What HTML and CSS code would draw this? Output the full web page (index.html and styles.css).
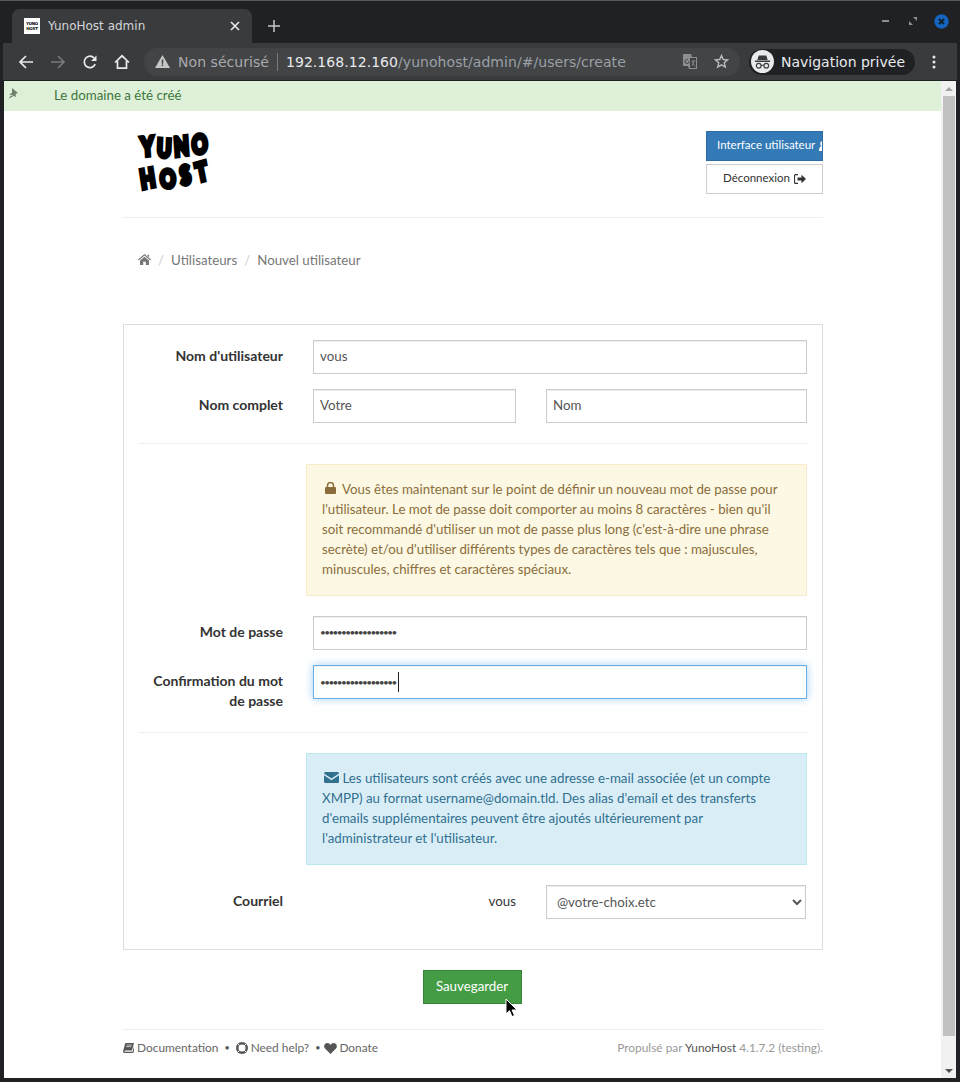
FILE: index.html
```html
<!DOCTYPE html>
<html lang="fr">
<head>
    <meta charset="UTF-8">
    <title>YunoHost admin</title>
    <link rel="stylesheet" href="styles.css">
</head>
<body>
<div class="window">

    <div class="tabstrip">
        <div class="tab">
            <span class="favicon"><span>YUNO</span><span>HOST</span></span>
            <span class="tab-title">YunoHost admin</span>
            <svg class="tab-close" width="10" height="10" viewBox="0 0 10 10"><path d="M1 1l8 8M9 1l-8 8" stroke="#e8eaed" stroke-width="1.6"/></svg>
        </div>
        <svg class="new-tab" width="12" height="12" viewBox="0 0 12 12"><path d="M6 0v12M0 6h12" stroke="#c4c7c5" stroke-width="1.5"/></svg>
        <div class="win-buttons">
            <svg width="10" height="4" viewBox="0 0 10 4"><rect y="1" width="7" height="2" fill="#8f8f8f"/></svg>
            <svg width="8" height="8" viewBox="0 0 8 8"><path d="M4 0h4v4zM0 4l4 4H0z" fill="#8f8f8f"/></svg>
            <svg width="15" height="15" viewBox="0 0 15 15"><circle cx="7.5" cy="7.5" r="7.2" fill="#1565c0"/><path d="M5 5l5 5M10 5l-5 5" stroke="#15202b" stroke-width="2"/></svg>
        </div>
    </div>

    <div class="toolbar">
        <svg class="nav-icon" width="16" height="16" viewBox="0 0 16 16"><path d="M15 8H2M8 2L2 8l6 6" fill="none" stroke="#e8eaed" stroke-width="1.7"/></svg>
        <svg class="nav-icon" width="16" height="16" viewBox="0 0 16 16"><path d="M1 8h13M8 2l6 6-6 6" fill="none" stroke="#77797b" stroke-width="1.7"/></svg>
        <svg class="nav-icon" width="16" height="16" viewBox="0 0 16 16"><path d="M13.2 10.2A5.7 5.7 0 1 1 12.2 4" fill="none" stroke="#e8eaed" stroke-width="1.7"/><path d="M14.5 1.5v5.5H9z" fill="#e8eaed"/></svg>
        <svg class="nav-icon" width="16" height="16" viewBox="0 0 16 16"><path d="M1 8.5L8 1.8l7 6.7M3.5 7v7.2h9V7" fill="none" stroke="#e8eaed" stroke-width="1.7"/></svg>
        <div class="omnibox">
            <svg width="15" height="13" viewBox="0 0 15 13"><path d="M7.5 0L15 13H0z" fill="#c4c7c5"/><path d="M6.8 4.5h1.4v4.2H6.8zM6.8 9.6h1.4v1.4H6.8z" fill="#3a3a3a"/></svg>
            <span class="not-secure">Non sécurisé</span>
            <span class="omni-sep"></span>
            <span class="url"><b>192.168.12.160</b>/yunohost/admin/#/users/create</span>
            <svg class="translate" width="14" height="15" viewBox="0 0 14 15"><path d="M0 0h8l1 3h5v12H6l-1-3H0z" fill="#8c8e90"/><path d="M7 4h6v10H7z" fill="#3f4042"/><path d="M6 7.500a2 2 0 1 1-.8-1.600" fill="none" stroke="#3f4042" stroke-width="1"/><path d="M8.500 7h4M10.500 7c0 3-1 4-2 5M9.500 8.500c.5 1.500 1.500 2.800 3 3.500" fill="none" stroke="#8c8e90" stroke-width="1"/></svg>
            <svg class="star" width="15" height="15" viewBox="0 0 15 15"><path d="M7.500 1.500l1.800 4 4.300.4-3.300 2.900 1 4.300-3.800-2.300-3.800 2.300 1-4.300L1.400 5.900l4.300-.4z" fill="none" stroke="#b9bbbe" stroke-width="1.400"/></svg>
        </div>
        <div class="incognito">
            <span class="incognito-icon">
                <svg width="18" height="16" viewBox="0 0 18 16"><path d="M5 1h8l1.500 5h-11zM1 6.500h16V8H1z" fill="#3a3b3d"/><circle cx="5" cy="12" r="2.500" fill="none" stroke="#3a3b3d" stroke-width="1.200"/><circle cx="13" cy="12" r="2.500" fill="none" stroke="#3a3b3d" stroke-width="1.200"/><path d="M7.500 11.500h3" stroke="#3a3b3d" stroke-width="1.200"/></svg>
            </span>
            <span>Navigation privée</span>
        </div>
        <svg class="menu-dots" width="4" height="14" viewBox="0 0 4 14"><circle cx="2" cy="2" r="1.500" fill="#e8eaed"/><circle cx="2" cy="7" r="1.500" fill="#e8eaed"/><circle cx="2" cy="12" r="1.500" fill="#e8eaed"/></svg>
    </div>
    <div class="toolbar-line"></div>

    <div class="viewport">
        <div class="page">
            <div class="flash">
                <svg class="flash-pin" width="11" height="11" viewBox="0 0 11 11"><path d="M4 0l6 5-2.500 1 .5 3L1 6l3-.8zM3 7.500L.5 10.800 5 8.500z" fill="#6f7f6b"/></svg>
                <span>Le domaine a été créé</span>
            </div>

            <div class="container">
                <header class="top">
                    <div class="logo">
                        <div class="logo-line"><span>Y</span><span>U</span><span>N</span><span>O</span></div>
                        <div class="logo-line"><span>H</span><span>O</span><span>S</span><span>T</span></div>
                    </div>
                    <div class="top-buttons">
                        <a class="btn btn-blue">Interface utilisateur
                            <svg width="10" height="10" viewBox="0 0 10 10"><circle cx="4" cy="2.800" r="2.800" fill="#fff"/><path d="M0 10c0-3.500 1-5 4-5s5 1.500 5 5z" fill="#fff"/></svg>
                        </a>
                        <a class="btn btn-plain">Déconnexion
                            <svg width="12" height="10" viewBox="0 0 12 10"><path d="M4 .7H1.500a1 1 0 0 0-1 1v6.600a1 1 0 0 0 1 1H4" fill="none" stroke="#333" stroke-width="1.200"/><path d="M3.500 3.400h4V.8L12 5 7.500 9.200V6.600h-4z" fill="#333"/></svg>
                        </a>
                    </div>
                </header>

                <nav class="breadcrumb">
                    <svg width="13" height="11" viewBox="0 0 13 11"><path d="M6.500 0L13 5.600l-.7.800-5.800-5-5.800 5L0 5.600zM2 6.500l4.500-3.800L11 6.500V11H7.800V7.700H5.200V11H2zM9.500 .8h1.600v2.400L9.500 1.800z" fill="#777"/></svg>
                    <span class="crumb-sep">/</span>
                    <a>Utilisateurs</a>
                    <span class="crumb-sep">/</span>
                    <a>Nouvel utilisateur</a>
                </nav>

                <form class="panel">
                    <div class="row">
                        <label class="row-label">Nom d'utilisateur</label>
                        <input class="field" type="text" value="vous">
                    </div>
                    <div class="row">
                        <label class="row-label">Nom complet</label>
                        <div class="two-fields">
                            <input class="field" type="text" value="Votre">
                            <input class="field" type="text" value="Nom">
                        </div>
                    </div>

                    <hr class="sep">

                    <div class="note note-warning">
                        <svg width="11" height="12" viewBox="0 0 11 12"><path d="M2.500 5.500V3.500a3 3 0 0 1 6 0v2" fill="none" stroke="#8a6d3b" stroke-width="1.500"/><rect y="5" width="11" height="7" rx="1" fill="#8a6d3b"/></svg>
                        Vous êtes maintenant sur le point de définir un nouveau mot de passe pour l'utilisateur. Le mot de passe doit comporter au moins 8 caractères - bien qu'il soit recommandé d'utiliser un mot de passe plus long (c'est-à-dire une phrase secrète) et/ou d'utiliser différents types de caractères tels que : majuscules, minuscules, chiffres et caractères spéciaux.
                    </div>

                    <div class="row">
                        <label class="row-label">Mot de passe</label>
                        <input class="field field-dots" type="text" value="••••••••••••••••••">
                    </div>
                    <div class="row">
                        <label class="row-label row-label-tall">Confirmation du mot de passe</label>
                        <div class="field field-dots field-focus">••••••••••••••••••<span class="caret"></span></div>
                    </div>

                    <hr class="sep">

                    <div class="note note-info">
                        <svg width="15" height="11" viewBox="0 0 15 11"><path d="M0 1.500A1.500 1.500 0 0 1 1.500 0h12A1.500 1.500 0 0 1 15 1.500L7.500 6.500zM0 3.300l7.500 5 7.500-5V9.500A1.500 1.500 0 0 1 13.500 11h-12A1.500 1.500 0 0 1 0 9.500z" fill="#31708f"/></svg>
                        Les utilisateurs sont créés avec une adresse e-mail associée (et un compte XMPP) au format username@domain.tld. Des alias d'email et des transferts d'emails supplémentaires peuvent être ajoutés ultérieurement par l'administrateur et l'utilisateur.
                    </div>

                    <div class="row row-mail">
                        <label class="row-label">Courriel</label>
                        <div class="two-fields">
                            <span class="mail-user">vous</span>
                            <select class="field">
                                <option>@votre-choix.etc</option>
                            </select>
                        </div>
                    </div>
                </form>

                <div class="actions">
                    <button class="btn-save" type="button">Sauvegarder</button>
                </div>

                <footer class="foot">
                    <div class="foot-links">
                        <svg width="11" height="10" viewBox="0 0 12 11"><path d="M2.500 0H12L9.800 8.300H2.300c-.8 0-.8 1.400 0 1.400h8.200L12 3.500V9l-1 2H1.500C.4 11-.2 10 .1 8.800z" fill="#555"/><path d="M4 2.300h5.500M3.500 4h5.500" stroke="#fff" stroke-width=".7"/></svg>
                        <a>Documentation</a>
                        <span class="dot">•</span>
                        <svg width="12" height="12" viewBox="0 0 12 12"><circle cx="6" cy="6" r="6" fill="#555"/><circle cx="6" cy="6" r="3.500" fill="#fff"/><path d="M1.800 1.800l2 2M10.200 1.800l-2 2M1.800 10.200l2-2M10.200 10.200l-2-2" stroke="#fff" stroke-width="1"/></svg>
                        <a>Need help?</a>
                        <span class="dot">•</span>
                        <svg class="foot-heart" width="13" height="11" viewBox="0 0 13 11"><path d="M6.500 11L1 5.500C-1 3 .8 0 3.300 0c1.400 0 2.500.8 3.200 2C7.200.8 8.300 0 9.700 0c2.500 0 4.300 3 2.300 5.500z" fill="#555"/></svg>
                        <a>Donate</a>
                    </div>
                    <div class="foot-credit">Propulsé par <a>YunoHost</a> 4.1.7.2 (testing).</div>
                </footer>
            </div>
        </div>

        <div class="scrollbar">
            <span class="arrow-up"></span>
            <span class="thumb"></span>
            <span class="arrow-down"></span>
        </div>
    </div>

    <svg class="cursor" width="13" height="20" viewBox="0 0 13 20"><path d="M1 1v15l3.500-3.300L7 18.500l2.500-1-2.500-5.500h5z" fill="#000" stroke="#fff" stroke-width="1"/></svg>
</div>
</body>
</html>
```

FILE: styles.css
```css
* {
    box-sizing: border-box;
}

html, body {
    margin: 0;
    height: 100%;
}

body {
    overflow: hidden;
    background-color: #222;
}

.window {
    position: relative;
    width: 960px;
    height: 1082px;
    padding: 2px 4px 4px 4px;
    background-color: #202124;
    border-top: 1px solid #5a5a5a;
    display: flex;
    flex-direction: column;
    font-family: 'DejaVu Sans', sans-serif;
}

/* browser chrome */
.tabstrip {
    height: 40px;
    flex: none;
    display: flex;
    align-items: flex-end;
    padding-left: 8px;
}

.tab {
    width: 240px;
    height: 34px;
    background-color: #3a3b3d;
    border-radius: 8px 8px 0 0;
    display: flex;
    align-items: center;
    padding: 0 12px;
    color: #d4d6d8;
    font-size: 12px;
}

.favicon {
    width: 16px;
    height: 16px;
    background-color: #fff;
    color: #000;
    font-size: 4px;
    line-height: 5px;
    font-weight: 700;
    letter-spacing: -0.2px;
    display: flex;
    flex-direction: column;
    align-items: center;
    justify-content: center;
    margin-right: 8px;
}

.tab-title {
    flex: 1;
}

.new-tab {
    margin: 0 0 11px 16px;
}

.win-buttons {
    margin-left: auto;
    height: 100%;
    display: flex;
    align-items: center;
    gap: 17px;
    padding: 0 7px 4px 0;
}

.toolbar {
    height: 37px;
    flex: none;
    background-color: #3a3b3d;
    margin: 0 -1px;
    display: flex;
    align-items: center;
    padding-left: 15px;
}

.toolbar-line {
    height: 1px;
    flex: none;
    background-color: #202124;
}

.nav-icon {
    margin-right: 16px;
}

.omnibox {
    width: 596px;
    height: 28px;
    flex: none;
    margin-left: -2px;
    border-radius: 14px;
    background-color: #434446;
    display: flex;
    align-items: center;
    padding: 0 11px 0 11px;
    font-size: 14px;
    letter-spacing: 0.05px;
    white-space: nowrap;
}

.not-secure {
    color: #a9abae;
    margin-left: 8px;
}

.omni-sep {
    width: 1px;
    height: 18px;
    background-color: #77797b;
    margin: 0 8px 0 8px;
}

.url {
    color: #9aa0a6;
    flex: 1;
}

.url b {
    color: #e8eaed;
    font-weight: 400;
}

.translate {
    margin-right: 17px;
}

.incognito {
    margin-left: 9px;
    width: 166px;
    height: 26px;
    flex: none;
    border-radius: 13px;
    background-color: #202124;
    display: flex;
    align-items: center;
    gap: 7px;
    color: #e8eaed;
    font-size: 14px;
    white-space: nowrap;
}

.incognito-icon {
    width: 23px;
    height: 23px;
    margin-left: 2px;
    border-radius: 50%;
    background-color: #e8eaed;
    display: flex;
    align-items: center;
    justify-content: center;
}

.incognito-icon svg {
    width: 17px;
}

.menu-dots {
    margin-left: 17px;
}

/* page */
.viewport {
    flex: 1;
    min-height: 0;
    display: flex;
    background-color: #fff;
}

.page {
    flex: 1;
    min-width: 0;
    overflow: hidden;
    font-family: 'Lato', sans-serif;
    font-size: 13.3px;
    line-height: 20px;
    color: #333;
}

.scrollbar {
    width: 15px;
    flex: none;
    background-color: #f1f1f1;
    display: flex;
    flex-direction: column;
    align-items: center;
    padding: 6px 0 5px;
}

.arrow-up, .arrow-down {
    width: 0;
    height: 0;
    border-left: 4px solid transparent;
    border-right: 4px solid transparent;
    flex: none;
}

.arrow-up {
    border-bottom: 4px solid #a3a3a3;
}

.arrow-down {
    border-top: 4px solid #505050;
}

.thumb {
    width: 12px;
    flex: 1;
    margin: 5px 0 33px;
    background-color: #c1c1c1;
}

.flash {
    height: 30px;
    background-color: #dff0d8;
    color: #3c763d;
    display: flex;
    align-items: center;
    padding: 0 0 2px 4px;
}

.flash span {
    margin-left: 35px;
}

.flash-pin {
    margin-top: -4px;
}

.container {
    width: 700px;
    margin-left: 119px;
}

.top {
    height: 107px;
    padding: 19px 0 0 15px;
    border-bottom: 1px solid #eee;
    display: flex;
    justify-content: space-between;
    align-items: flex-start;
}

/* logo is real text, thickened with a stroke so it looks brushed */
.logo {
    width: 66px;
    margin: 1px 0 0 3px;
    font-weight: 900;
    font-size: 19px;
    line-height: 30px;
    color: #000;
    -webkit-text-stroke: 3.5px #000;
}

.logo-line {
    display: flex;
    justify-content: space-between;
    height: 30px;
}

.logo-line span {
    display: block;
    transform: scaleY(1.35) rotate(-5deg);
}

.logo-line span:nth-child(2) {
    transform: translateY(2px) scaleY(1.3) rotate(3deg);
}

.logo-line span:nth-child(4) {
    transform: translateY(-2px) scaleY(1.35) rotate(-8deg);
}

.logo-line + .logo-line {
    width: 67px;
    margin-left: -1px;
    transform: rotate(-5deg);
}

.top-buttons {
    width: 117px;
    margin-top: 1px;
    display: flex;
    flex-direction: column;
    gap: 3px;
}

.btn {
    height: 30px;
    font-size: 11.5px;
    display: flex;
    align-items: center;
    justify-content: center;
    gap: 4px;
    padding-bottom: 2px;
    white-space: nowrap;
    overflow: hidden;
}

.btn svg {
    flex: none;
    margin-top: 2px;
}

.btn-blue {
    background-color: #337ab7;
    border: 1px solid #2e6da4;
    color: #fff;
    justify-content: flex-start;
    padding-left: 10px;
}

.btn-plain {
    background-color: #fff;
    border: 1px solid #ccc;
    color: #333;
}

.breadcrumb {
    height: 106px;
    padding: 32px 0 0 15px;
    display: flex;
    align-items: flex-start;
    color: #777;
}

.breadcrumb svg {
    margin-top: 4px;
}

.crumb-sep {
    color: #ccc;
    margin: 0 7px;
}

.panel {
    height: 626px;
    border: 1px solid #ddd;
    padding: 15px 15px 0;
}

.row {
    display: flex;
    margin-bottom: 15px;
}

.row-label {
    width: 144px;
    flex: none;
    margin-right: 30px;
    padding-top: 6px;
    font-size: 14px;
    font-weight: 700;
    text-align: right;
}

.row-label-tall {
    padding-bottom: 1px;
}

.field {
    flex: 1;
    min-width: 0;
    height: 34px;
    padding: 5px 6px 7px;
    border: 1px solid #ccc;
    background-color: #fff;
    color: #555;
    font-family: 'Lato', sans-serif;
    font-size: 13.3px;
    line-height: 20px;
    outline: none;
    border-radius: 0;
    box-shadow: inset 0 1px 1px rgba(0, 0, 0, 0.075);
}

.two-fields {
    flex: 1;
    display: grid;
    grid-template-columns: 203px 1fr;
    column-gap: 30px;
}

.field-dots {
    color: #444;
    font-size: 10px;
    letter-spacing: -1.6px;
    white-space: nowrap;
}

.field-focus {
    border-color: #66afe9;
    box-shadow: inset 0 1px 1px rgba(0, 0, 0, 0.075), 0 0 8px rgba(102, 175, 233, 0.6);
    display: flex;
    align-items: center;
    padding: 6px;
}

.caret {
    width: 1px;
    height: 20px;
    margin-left: 2px;
    background-color: #222;
}

.sep {
    border: none;
    border-top: 1px solid #eee;
    margin: 20px 0;
}

.note {
    margin: 0 0 20px 167px;
    padding: 14px 15px 16px;
    border: 1px solid;
}

.note-warning {
    background-color: #fcf8e3;
    border-color: #faebcc;
    color: #8a6d3b;
}

.note-warning svg {
    margin: 0 3px 0 3px;
}

.note-info {
    background-color: #d9edf7;
    border-color: #bce8f1;
    color: #31708f;
}

.note-info svg {
    margin-left: 2px;
}

.mail-user {
    padding-top: 6px;
    text-align: right;
}

.row-mail .field {
    padding: 6px 6px;
    margin-right: 1px;
}

.actions {
    padding-top: 20px;
    height: 80px;
    border-bottom: 1px solid #eee;
    text-align: center;
    padding-right: 2px;
}

.btn-save {
    width: 99px;
    height: 34px;
    background-color: #449d44;
    border: 1px solid #398439;
    color: #fff;
    font-family: 'Lato', sans-serif;
    font-size: 13.3px;
    padding: 0 0 2px;
}

.foot {
    padding-top: 8px;
    display: flex;
    justify-content: space-between;
    font-size: 11.9px;
    color: #777;
}

.foot-links {
    display: flex;
    align-items: center;
    gap: 3px;
}

.foot-links a {
    color: #666;
}

.dot {
    margin: 0 3px;
    font-size: 9px;
    color: #555;
}

.foot-heart {
    margin: 0 -1px 0 -2px;
}

.foot-credit {
    color: #999;
}

.foot-credit a {
    color: #555;
}

.cursor {
    position: absolute;
    left: 505px;
    top: 997px;
}
```
